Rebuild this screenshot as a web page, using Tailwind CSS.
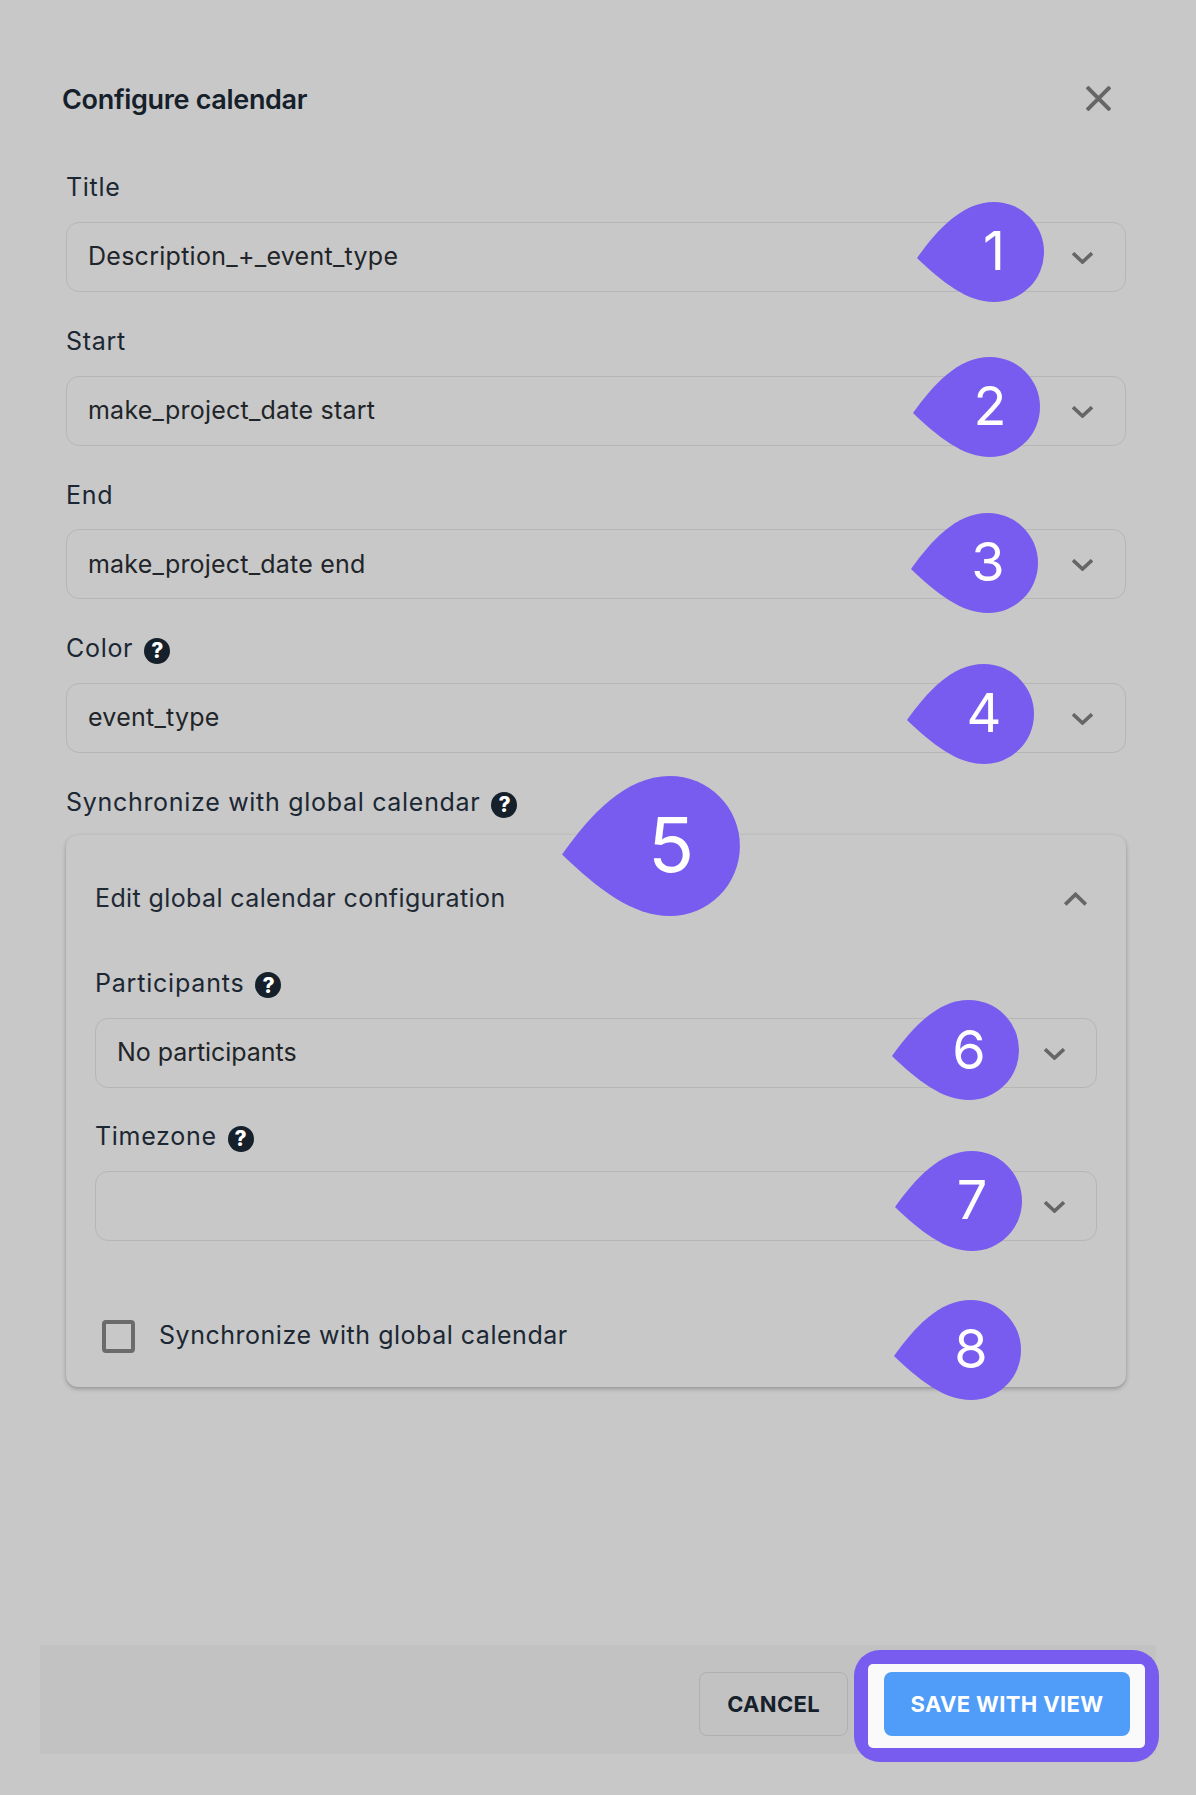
<!DOCTYPE html>
<html lang="en">
<head>
<meta charset="utf-8">
<script src="https://cdn.jsdelivr.net/npm/@tailwindcss/browser@4"></script>
<title>Configure calendar</title>
</head>
<body class="bg-[#c8c8c8] font-['Inter',sans-serif]">
<div class="relative w-[1196px] h-[1795px] overflow-hidden bg-[#c8c8c8] text-[#1b2733]">

  <!-- Header -->
  <header class="flex items-center justify-between h-[172px] pl-[62px] pr-[85px] pt-[26px]">
    <h1 class="mt-[2px] text-[27px] leading-[32px] font-semibold text-[#15202b] tracking-[-0.012em]">Configure calendar</h1>
    <svg class="w-[25px] h-[25px] -mt-[1px]" viewBox="0 0 25 25" fill="none" stroke="#666" stroke-width="4"><path d="M1 1L24 24M24 1L1 24"/></svg>
  </header>

  <!-- Form -->
  <main class="flex flex-col ml-[66px] w-[1060px]">
    <div class="flex flex-col gap-[33.67px]">
      <div>
        <label class="flex items-center h-[30px] mb-[20px] pt-[2px] text-[25px] tracking-[0.7px]">Title</label>
        <div class="flex items-center justify-between h-[70px] pl-[21px] pr-[32px] border border-[#b6b6b6] rounded-[13px]">
          <span class="text-[25px] text-[#212529] tracking-[0.27px]">Description_+_event_type</span>
          <svg class="w-[21px] h-[12px] mt-[2px]" viewBox="0 0 21 12" fill="none" stroke="#666" stroke-width="3.6"><path d="M1 1.2L10.5 10L20 1.2"/></svg>
        </div>
      </div>
      <div>
        <label class="flex items-center h-[30px] mb-[20px] pt-[2px] text-[25px] tracking-[0.7px]">Start</label>
        <div class="flex items-center justify-between h-[70px] pl-[21px] pr-[32px] border border-[#b6b6b6] rounded-[13px]">
          <span class="text-[25px] text-[#212529] tracking-[0.22px]">make_project_date start</span>
          <svg class="w-[21px] h-[12px] mt-[2px]" viewBox="0 0 21 12" fill="none" stroke="#666" stroke-width="3.6"><path d="M1 1.2L10.5 10L20 1.2"/></svg>
        </div>
      </div>
      <div>
        <label class="flex items-center h-[30px] mb-[20px] pt-[2px] text-[25px] tracking-[0.7px]">End</label>
        <div class="flex items-center justify-between h-[70px] pl-[21px] pr-[32px] border border-[#b6b6b6] rounded-[13px]">
          <span class="text-[25px] text-[#212529] tracking-[0.2px]">make_project_date end</span>
          <svg class="w-[21px] h-[12px] mt-[2px]" viewBox="0 0 21 12" fill="none" stroke="#666" stroke-width="3.6"><path d="M1 1.2L10.5 10L20 1.2"/></svg>
        </div>
      </div>
      <div>
        <label class="flex items-center gap-[11px] h-[30px] mb-[20px] pt-[2px] text-[25px] tracking-[0.7px]">Color
          <span class="flex items-center justify-center w-[26px] h-[26px] mt-[4px] rounded-full bg-[#15202b] text-white text-[21px] font-extrabold leading-none tracking-normal">?</span>
        </label>
        <div class="flex items-center justify-between h-[70px] pl-[21px] pr-[32px] border border-[#b6b6b6] rounded-[13px]">
          <span class="text-[25px] text-[#212529] tracking-[0.25px]">event_type</span>
          <svg class="w-[21px] h-[12px] mt-[2px]" viewBox="0 0 21 12" fill="none" stroke="#666" stroke-width="3.6"><path d="M1 1.2L10.5 10L20 1.2"/></svg>
        </div>
      </div>
      <div>
        <label class="flex items-center gap-[11px] h-[30px] mb-[18px] pt-[2px] text-[25px] tracking-[0.7px]">Synchronize with global calendar
          <span class="flex items-center justify-center w-[26px] h-[26px] mt-[4px] rounded-full bg-[#15202b] text-white text-[21px] font-extrabold leading-none tracking-normal">?</span>
        </label>

        <!-- Accordion card -->
        <section class="h-[552px] px-[29px] rounded-[12px] bg-[#c8c8c8] shadow-[0_2px_4px_rgba(0,0,0,0.25),0_0_2px_rgba(0,0,0,0.06)]">
          <div class="flex items-center justify-between h-[133px] pb-[4px] pr-[10px]">
            <span class="text-[25px] text-[#1f2a35] tracking-[0.39px]">Edit global calendar configuration</span>
            <svg class="w-[23px] h-[14px]" viewBox="0 0 23 14" fill="none" stroke="#666" stroke-width="3.8"><path d="M1.2 12.5L11.5 2.5L21.8 12.5"/></svg>
          </div>
          <div class="flex flex-col gap-[33px]">
            <div>
              <label class="flex items-center gap-[11px] h-[30px] mb-[20px] pt-[2px] text-[25px] tracking-[0.8px]">Participants
                <span class="flex items-center justify-center w-[26px] h-[26px] mt-[3px] rounded-full bg-[#15202b] text-white text-[21px] font-extrabold leading-none tracking-normal">?</span>
              </label>
              <div class="flex items-center justify-between h-[70px] pl-[21px] pr-[31px] border border-[#b6b6b6] rounded-[13px]">
                <span class="text-[25px] text-[#212529] tracking-[-0.05px]">No participants</span>
                <svg class="w-[21px] h-[12px] mt-[2px]" viewBox="0 0 21 12" fill="none" stroke="#666" stroke-width="3.6"><path d="M1 1.2L10.5 10L20 1.2"/></svg>
              </div>
            </div>
            <div>
              <label class="flex items-center gap-[11px] h-[30px] mb-[20px] pt-[2px] text-[25px] tracking-[0.7px]">Timezone
                <span class="flex items-center justify-center w-[26px] h-[26px] mt-[4px] rounded-full bg-[#15202b] text-white text-[21px] font-extrabold leading-none tracking-normal">?</span>
              </label>
              <div class="flex items-center justify-between h-[70px] pl-[21px] pr-[31px] border border-[#b6b6b6] rounded-[13px]">
                <span></span>
                <svg class="w-[21px] h-[12px] mt-[2px]" viewBox="0 0 21 12" fill="none" stroke="#666" stroke-width="3.6"><path d="M1 1.2L10.5 10L20 1.2"/></svg>
              </div>
            </div>
          </div>
          <div class="flex items-center gap-[24px] mt-[79px] pl-[7px] h-[33px]">
            <span class="block w-[33px] h-[33px] border-[4px] border-[#6b6b6b] rounded-[4px]"></span>
            <span class="text-[25px] tracking-[0.52px]">Synchronize with global calendar</span>
          </div>
        </section>
      </div>
    </div>
  </main>

  <!-- Footer -->
  <footer class="flex items-center justify-end gap-[36px] h-[109px] mt-[258px] ml-[40px] w-[1116px] pr-[26px] pt-[9px] bg-[#c2c2c2]">
    <button class="w-[149px] h-[64px] pt-[2px] border border-[#b0b0b0] rounded-[8px] text-[22px] font-bold tracking-[0.3px] text-[#15202b]">CANCEL</button>
    <div class="relative w-[246px] h-[64px]">
      <div class="absolute left-[-30px] top-[-22px] w-[305px] h-[112px] p-[14px] rounded-[26px] bg-[#785bef]">
        <div class="w-full h-full bg-[#fafafa] rounded-[5px]"></div>
      </div>
      <button class="relative w-full h-full pt-[2px] rounded-[8px] bg-[#4f9cf9] text-white text-[22px] font-bold tracking-[0.35px]">SAVE WITH VIEW</button>
    </div>
  </footer>

  <!-- Numbered pins -->
  <div class="absolute left-[917px] top-[202px] w-[127px] h-[100px]">
    <svg class="absolute inset-0 w-full h-full" viewBox="0 0 127 100"><path fill="#785bef" d="M0 56C20 28 45 0 77 0A50 50 0 0 1 77 100C50 100 25 80 0 56Z"/></svg>
    <span class="absolute left-[47px] top-[0px] w-[60px] h-[98px] flex items-center justify-center text-[54px] leading-none text-white">1</span>
  </div>
  <div class="absolute left-[913px] top-[357px] w-[127px] h-[100px]">
    <svg class="absolute inset-0 w-full h-full" viewBox="0 0 127 100"><path fill="#785bef" d="M0 56C20 28 45 0 77 0A50 50 0 0 1 77 100C50 100 25 80 0 56Z"/></svg>
    <span class="absolute left-[47px] top-[0px] w-[60px] h-[98px] flex items-center justify-center text-[54px] leading-none text-white">2</span>
  </div>
  <div class="absolute left-[911px] top-[513px] w-[127px] h-[100px]">
    <svg class="absolute inset-0 w-full h-full" viewBox="0 0 127 100"><path fill="#785bef" d="M0 56C20 28 45 0 77 0A50 50 0 0 1 77 100C50 100 25 80 0 56Z"/></svg>
    <span class="absolute left-[47px] top-[0px] w-[60px] h-[98px] flex items-center justify-center text-[54px] leading-none text-white">3</span>
  </div>
  <div class="absolute left-[907px] top-[664px] w-[127px] h-[100px]">
    <svg class="absolute inset-0 w-full h-full" viewBox="0 0 127 100"><path fill="#785bef" d="M0 56C20 28 45 0 77 0A50 50 0 0 1 77 100C50 100 25 80 0 56Z"/></svg>
    <span class="absolute left-[47px] top-[0px] w-[60px] h-[98px] flex items-center justify-center text-[54px] leading-none text-white">4</span>
  </div>
  <div class="absolute left-[562px] top-[776px] w-[178px] h-[140px]">
    <svg class="absolute inset-0 w-full h-full" viewBox="0 0 127 100"><path fill="#785bef" d="M0 56C20 28 45 0 77 0A50 50 0 0 1 77 100C50 100 25 80 0 56Z"/></svg>
    <span class="absolute left-[66px] top-[0px] w-[86px] h-[136px] flex items-center justify-center text-[76px] leading-none text-white">5</span>
  </div>
  <div class="absolute left-[892px] top-[1000px] w-[127px] h-[100px]">
    <svg class="absolute inset-0 w-full h-full" viewBox="0 0 127 100"><path fill="#785bef" d="M0 56C20 28 45 0 77 0A50 50 0 0 1 77 100C50 100 25 80 0 56Z"/></svg>
    <span class="absolute left-[47px] top-[0px] w-[60px] h-[100px] flex items-center justify-center text-[54px] leading-none text-white">6</span>
  </div>
  <div class="absolute left-[895px] top-[1151px] w-[127px] h-[100px]">
    <svg class="absolute inset-0 w-full h-full" viewBox="0 0 127 100"><path fill="#785bef" d="M0 56C20 28 45 0 77 0A50 50 0 0 1 77 100C50 100 25 80 0 56Z"/></svg>
    <span class="absolute left-[47px] top-[0px] w-[60px] h-[98px] flex items-center justify-center text-[54px] leading-none text-white">7</span>
  </div>
  <div class="absolute left-[894px] top-[1300px] w-[127px] h-[100px]">
    <svg class="absolute inset-0 w-full h-full" viewBox="0 0 127 100"><path fill="#785bef" d="M0 56C20 28 45 0 77 0A50 50 0 0 1 77 100C50 100 25 80 0 56Z"/></svg>
    <span class="absolute left-[47px] top-[0px] w-[60px] h-[98px] flex items-center justify-center text-[54px] leading-none text-white">8</span>
  </div>
</div>
</body>
</html>
